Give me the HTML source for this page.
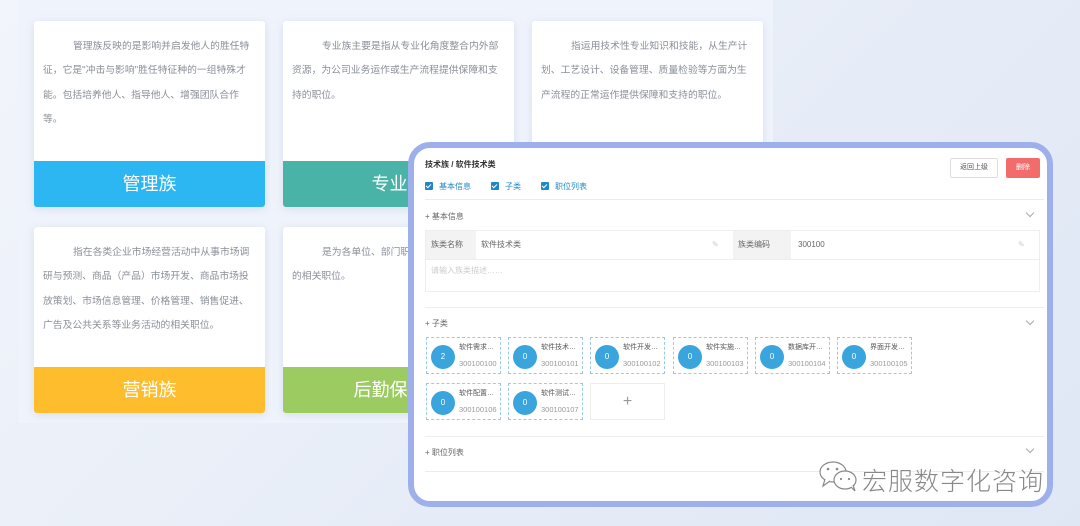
<!DOCTYPE html>
<html><head><meta charset="utf-8">
<style>
*{margin:0;padding:0;box-sizing:border-box}
body{width:1080px;height:526px;overflow:hidden;position:relative;background:linear-gradient(135deg,#f2f5fb 0%,#e6ecf7 60%,#dfe7f5 100%);font-family:"Liberation Sans","Noto Sans CJK SC",sans-serif}
.panel{position:absolute;left:18px;top:0;width:755px;height:423px;background:#eff3fb}
.card{position:absolute;width:231px;height:186px;background:#fff;border-radius:3px;box-shadow:0 2px 8px rgba(150,165,200,.25);overflow:hidden}
.card p{font-size:9.8px;color:#8a8f99;line-height:24.4px;position:absolute;left:9px;top:14px;width:207px;text-indent:30px}
.card .band{position:absolute;left:0;bottom:0;width:100%;height:46px;color:#fff;font-size:18px;text-align:center;line-height:46px}
.modal{position:absolute;left:408px;top:142px;width:645px;height:365px;border:6px solid #9db0ec;border-radius:22px;background:#fff;overflow:hidden}
.in{position:absolute;font-size:8px;color:#555}
.hr{position:absolute;left:11px;width:619px;height:1px;background:#ececec}
.cb{display:inline-block;width:8px;height:8px;background:#1e88c8;border-radius:1px;vertical-align:-1px;margin-right:6px;position:relative}
.cb:after{content:"";position:absolute;left:2px;top:1px;width:2px;height:4px;border:solid #fff;border-width:0 1px 1px 0;transform:rotate(45deg)}
.sub{position:absolute;width:75px;height:37px;border:1px dashed #9cc9ea}
.sub .c{position:absolute;left:4px;top:7px;width:24px;height:24px;border-radius:50%;background:#3aa4dc;color:#fff;font-size:8px;text-align:center;line-height:24px}
.sub .t{position:absolute;left:32px;top:4px;width:40px;font-size:7px;color:#555;white-space:nowrap;overflow:hidden;text-overflow:ellipsis}
.sub .n{position:absolute;left:32px;top:21px;font-size:7.5px;color:#999}
.chev{position:absolute;right:14px;width:6px;height:6px;border:solid #aaa;border-width:0 1px 1px 0;transform:rotate(45deg)}
</style></head><body>
<div class="panel"></div>
<div class="card" style="left:34px;top:21px"><p>管理族反映的是影响并启发他人的胜任特征，它是"冲击与影响"胜任特征种的一组特殊才能。包括培养他人、指导他人、增强团队合作等。</p><div class="band" style="background:#2cb7f3">管理族</div></div>
<div class="card" style="left:283px;top:21px"><p>专业族主要是指从专业化角度整合内外部资源，为公司业务运作或生产流程提供保障和支持的职位。</p><div class="band" style="background:#49b3a7">专业族</div></div>
<div class="card" style="left:532px;top:21px"><p>指运用技术性专业知识和技能，从生产计划、工艺设计、设备管理、质量检验等方面为生产流程的正常运作提供保障和支持的职位。</p><div class="band" style="background:#6a87e0">技术族</div></div>
<div class="card" style="left:34px;top:227px"><p>指在各类企业市场经营活动中从事市场调研与预测、商品（产品）市场开发、商品市场投放策划、市场信息管理、价格管理、销售促进、广告及公共关系等业务活动的相关职位。</p><div class="band" style="background:#fdbd2c">营销族</div></div>
<div class="card" style="left:283px;top:227px"><p>是为各单位、部门职能提供的以服务为主的相关职位。</p><div class="band" style="background:#9ccb62">后勤保障族</div></div>

<div class="modal">
<div class="in" style="left:11px;top:11px;font-weight:bold;color:#333">技术族 / 软件技术类</div>
<div class="in" style="left:536px;top:10px;width:48px;height:20px;border:1px solid #ddd;border-radius:2px;text-align:center;line-height:18px;font-size:7px">返回上级</div>
<div class="in" style="left:592px;top:10px;width:34px;height:20px;background:#f26c6c;border-radius:2px;color:#fff;text-align:center;line-height:20px;font-size:7px">删除</div>
<div class="in" style="left:11px;top:33px;color:#1e88c8"><span class="cb"></span>基本信息<span style="display:inline-block;width:20px"></span><span class="cb"></span>子类<span style="display:inline-block;width:20px"></span><span class="cb"></span>职位列表</div>
<div class="hr" style="top:51px"></div>
<div class="in" style="left:11px;top:63px;color:#666">+ 基本信息</div><div class="chev" style="top:62px"></div>
<div class="in" style="left:11px;top:82px;width:615px;height:62px;border:1px solid #eee">
 <div style="position:absolute;left:0;top:0;width:50px;height:28px;background:#f3f3f3;line-height:28px;padding-left:5px;color:#666">族类名称</div>
 <div style="position:absolute;left:55px;top:0;line-height:28px;color:#666">软件技术类</div>
 <div style="position:absolute;left:286px;top:0;line-height:28px;color:#ccc">✎</div>
 <div style="position:absolute;left:307px;top:0;width:58px;height:28px;background:#f3f3f3;line-height:28px;padding-left:5px;color:#666">族类编码</div>
 <div style="position:absolute;left:372px;top:0;line-height:28px;color:#666">300100</div>
 <div style="position:absolute;left:592px;top:0;line-height:28px;color:#ccc">✎</div>
 <div style="position:absolute;left:0;top:28px;width:100%;height:1px;background:#eee"></div>
 <div style="position:absolute;left:5px;top:34px;color:#ccc">请输入族类描述……</div>
</div>
<div class="hr" style="top:159px"></div>
<div class="in" style="left:11px;top:170px;color:#666">+ 子类</div><div class="chev" style="top:170px"></div>
<div class="sub" style="left:12px;top:189px"><div class="c">2</div><div class="t">软件需求开发子类</div><div class="n">300100100</div></div>
<div class="sub" style="left:94px;top:189px"><div class="c">0</div><div class="t">软件技术支持子类</div><div class="n">300100101</div></div>
<div class="sub" style="left:176px;top:189px"><div class="c">0</div><div class="t">软件开发子类别</div><div class="n">300100102</div></div>
<div class="sub" style="left:259px;top:189px"><div class="c">0</div><div class="t">软件实施子类别</div><div class="n">300100103</div></div>
<div class="sub" style="left:341px;top:189px"><div class="c">0</div><div class="t">数据库开发子类</div><div class="n">300100104</div></div>
<div class="sub" style="left:423px;top:189px"><div class="c">0</div><div class="t">界面开发子类别</div><div class="n">300100105</div></div>
<div class="sub" style="left:12px;top:235px"><div class="c">0</div><div class="t">软件配置管理子类</div><div class="n">300100106</div></div>
<div class="sub" style="left:94px;top:235px"><div class="c">0</div><div class="t">软件测试子类别</div><div class="n">300100107</div></div>
<div class="sub" style="left:176px;top:235px;border:1px solid #eee;text-align:center;line-height:35px;font-size:16px;color:#999">+</div>
<div class="hr" style="top:288px"></div>
<div class="in" style="left:11px;top:299px;color:#666">+ 职位列表</div><div class="chev" style="top:298px"></div>
<div class="hr" style="top:323px"></div>
<svg style="position:absolute;left:404px;top:311px" width="44" height="36" viewBox="0 0 44 36"><g fill="#fff" stroke="#888" stroke-width="1.2"><ellipse cx="15" cy="13" rx="13" ry="10"/><path d="M7 20 L5 27 L12 22"/><ellipse cx="27" cy="21" rx="11" ry="9"/><path d="M33 28 L37 32 L35 26"/></g><g fill="#888"><circle cx="10" cy="10" r="1.3"/><circle cx="19" cy="10" r="1.3"/><circle cx="23" cy="20" r="1.1"/><circle cx="31" cy="20" r="1.1"/></g></svg>
<div style="position:absolute;left:448px;top:314px;font-size:25px;color:#888;letter-spacing:1px;text-shadow:0 0 2px #fff,0 0 2px #fff;font-family:'Noto Sans CJK SC',sans-serif;font-weight:300">宏服数字化咨询</div>
</div>
</body></html>
